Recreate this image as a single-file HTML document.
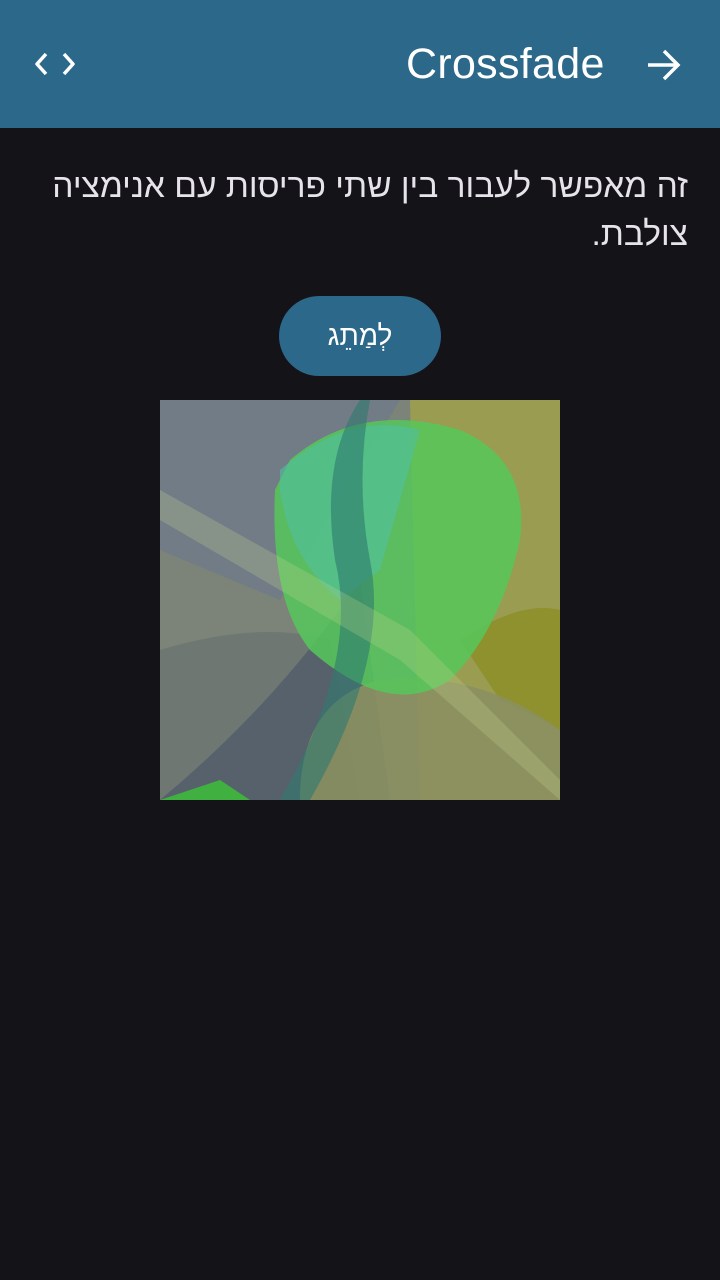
<!DOCTYPE html>
<html><head><meta charset="utf-8"><style>
html,body{margin:0;padding:0;width:720px;height:1280px;background:#141318;overflow:hidden;font-family:"Liberation Sans","Noto Sans CJK SC",sans-serif;}
.hdr{position:absolute;left:0;top:0;width:720px;height:128px;background:#2b6889;}
.title{position:absolute;left:406px;top:38px;font-size:43px;color:#fff;line-height:52px;letter-spacing:0.3px;}
.txt{position:absolute;right:32px;top:163px;width:680px;direction:rtl;text-align:right;color:#e6e4ea;font-size:33.5px;line-height:48px;}
.btn{position:absolute;left:279px;top:296px;width:162px;height:80px;border-radius:40px;background:#2b6889;color:#fff;font-size:28px;text-align:center;line-height:80px;}
.img{position:absolute;left:160px;top:400px;width:400px;height:400px;}
</style></head><body>
<div class="hdr">
<svg style="position:absolute;left:34px;top:50px" width="44" height="30" viewBox="0 0 44 30"><path d="M12 4 L3 14 L12 24 M30 4 L39 14 L30 24" stroke="#fff" stroke-width="3.5" fill="none" stroke-linejoin="round"/></svg>
<div class="title">Crossfade</div>
<svg style="position:absolute;left:644px;top:46px" width="40" height="38" viewBox="0 0 40 38"><path d="M4 19 H34 M20 5 L34 19 L20 33" stroke="#fff" stroke-width="3.5" fill="none"/></svg>
</div>
<div class="txt">זה מאפשר לעבור בין שתי פריסות עם אנימציה צולבת.</div>
<div class="btn">לְמַתֵג</div>
<svg class="img" viewBox="0 0 400 400">
<rect width="400" height="400" fill="#7c8378"/>
<path d="M0 0 H240 L120 200 L0 150 Z" fill="#6d7890" opacity=".6"/>
<path d="M0 250 Q100 220 170 240 L200 400 H0 Z" fill="#6a7470" opacity=".8"/>
<path d="M0 400 Q120 300 200 180 L230 400 Z" fill="#4d5868" opacity=".7"/>
<path d="M250 0 H400 V400 H260 Z" fill="#a0a24a" opacity=".85"/>
<path d="M300 240 Q360 200 400 210 V330 L340 300 Z" fill="#8a8a20" opacity=".7"/>
<path d="M140 400 Q140 300 220 280 Q320 270 400 330 V400 Z" fill="#8b9060" opacity=".9"/>
<path d="M130 60 Q200 0 300 30 Q370 60 360 140 Q340 230 290 280 Q230 320 150 250 Q110 200 115 90 Z" fill="#56c85a" opacity=".85"/>
<path d="M120 70 Q190 10 260 30 L220 170 L180 200 Q130 160 120 90 Z" fill="#50c0a0" opacity=".6"/>
<path d="M210 0 Q195 80 210 160 Q230 260 150 400 H120 Q200 260 175 160 Q160 60 200 0 Z" fill="#2e7a70" opacity=".6"/>
<path d="M0 120 L240 260 L400 400 V380 L250 230 L0 90 Z" fill="#c8d890" opacity=".25"/>
<path d="M0 400 L60 380 L90 400 Z" fill="#40b040"/>
</svg>
</body></html>
